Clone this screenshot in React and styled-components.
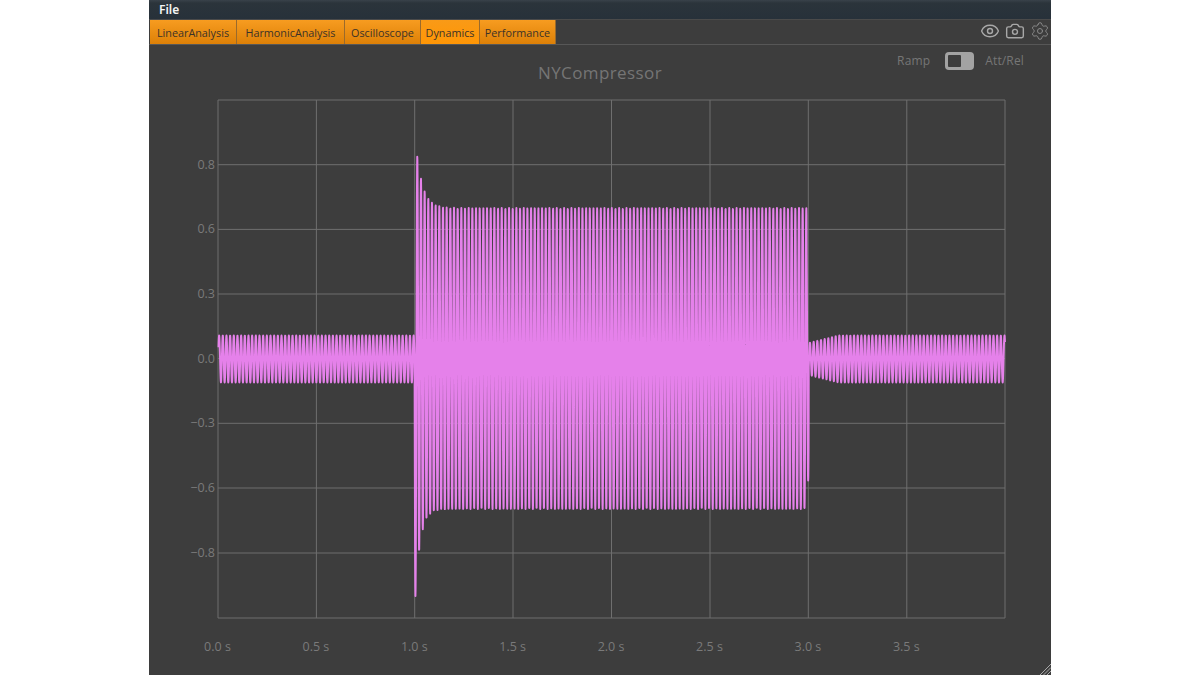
import React, { useMemo } from "react";
import styled, { createGlobalStyle } from "styled-components";
import { Eye, Camera, Settings } from "lucide-react";

const Global = createGlobalStyle`
  html, body { margin: 0; padding: 0; background: #fff; }
  body { font-family: "Open Sans", "Noto Sans", sans-serif; overflow: hidden; }
`;

const Page = styled.div`
  width: 1200px;
  height: 675px;
  display: flex;
  justify-content: center;
`;

const Win = styled.div`
  position: relative;
  width: 902px;
  height: 675px;
  background: #3d3d3d;
  display: flex;
  flex-direction: column;
  overflow: hidden;
`;

const MenuBar = styled.div`
  height: 19px;
  background: linear-gradient(#39424a 0, #2b343b 3px, #27313a 100%);
  display: flex;
  align-items: center;
  padding-left: 10px;
  border-bottom: 1px solid #4a4a4a;
`;

const MenuItem = styled.span`
  color: #f4f4f4;
  font-size: 12px;
  font-weight: 600;
  font-family: "Noto Sans", sans-serif;
`;

const TabRow = styled.div`
  height: 24px;
  display: flex;
  align-items: stretch;
  border-bottom: 1px solid #575757;
  padding-left: 1px;
`;

const Tab = styled.div`
  width: ${(p) => p.$w}px;
  box-sizing: border-box;
  display: flex;
  align-items: center;
  justify-content: center;
  font-size: 10.8px;
  padding-top: 1px;
  color: #3b3228;
  border-right: 1px solid #9a6a2c;
  background: ${(p) =>
    p.$active
      ? "linear-gradient(#f99a17, #ff9605)"
      : "linear-gradient(#f79c20, #dd8007)"};
`;

const IconGroup = styled.div`
  margin-left: auto;
  margin-bottom: 2px;
  display: flex;
  align-items: center;
  gap: 5px;
  padding-right: 1px;
  color: #a8a8a8;
`;

const Header = styled.div`
  height: 51px;
  display: grid;
  grid-template-columns: 1fr auto 1fr;
`;

const Title = styled.div`
  align-self: start;
  margin-top: 16px;
  font-size: 17px;
  line-height: 24px;
  letter-spacing: 0.4px;
  color: #757575;
`;

const ToggleRow = styled.div`
  justify-self: end;
  align-self: start;
  margin-top: 7px;
  margin-right: 27px;
  display: flex;
  align-items: center;
  gap: 15px;
  font-size: 12px;
  letter-spacing: 0.15px;
  line-height: 18px;
  color: #767676;
`;

const Switch = styled.div`
  width: 29px;
  height: 18px;
  box-sizing: border-box;
  border-radius: 4px;
  background: #a3a3a3;
  padding: 3px 3px;
  margin-right: -4px;
`;

const Knob = styled.div`
  width: 13px;
  height: 12px;
  background: #3d3d3d;
  border-radius: 1px;
`;

const Plot = styled.svg`
  display: block;
  flex: none;
  width: 902px;
  height: 580px;
`;

const Grip = styled.svg`
  position: absolute;
  right: 0;
  bottom: 0;
  width: 12px;
  height: 12px;
`;

const tabs = [
  ["LinearAnalysis", 87],
  ["HarmonicAnalysis", 108],
  ["Oscilloscope", 76],
  ["Dynamics", 59],
  ["Performance", 76],
];

const vLines = [218, 316.4, 414.7, 513, 611.5, 710, 808.3, 906.8, 1005];
const hLines = [100, 164.7, 229.4, 294, 358.5, 423.3, 488, 553, 618];
const yLabels = [
  ["0.8", 164.7],
  ["0.6", 229.4],
  ["0.3", 294],
  ["0.0", 358.5],
  ["−0.3", 423.3],
  ["−0.6", 488],
  ["−0.8", 553],
];
const xLabels = ["0.0 s", "0.5 s", "1.0 s", "1.5 s", "2.0 s", "2.5 s", "3.0 s", "3.5 s"];

function envelope(x) {
  if (x < 414.3) return [23, 24];
  if (x < 806.6) {
    const up = x < 415.8 ? 23 : 150.5 + 52 * Math.exp(-Math.max(0, x - 417.3) / 6.5);
    const down = 150.5 + 87 * Math.exp(-Math.max(0, x - 415.5) / 5);
    return [up, down];
  }
  if (x < 808.6) return [122, 122];
  const r = Math.min(1, (x - 808.6) / 30);
  const a = 15.5 + 7.5 * r;
  return [a, a + 1];
}

function buildWave() {
  const period = 3.67;
  const pts = [];
  for (let x = 218.5; x <= 1005; x += 0.15) {
    const s = Math.cos((2 * Math.PI * (x - 417.3)) / period);
    const [up, down] = envelope(x);
    const y = 358.5 - (s > 0 ? s * up : s * down);
    pts.push(`${x.toFixed(2)},${y.toFixed(2)}`);
  }
  return "M" + pts.join("L");
}

export default function App() {
  const wave = useMemo(buildWave, []);
  return (
    <Page>
      <Global />
      <Win>
        <MenuBar>
          <MenuItem>File</MenuItem>
        </MenuBar>
        <TabRow>
          {tabs.map(([name, w]) => (
            <Tab key={name} $w={w} $active={name === "Dynamics"}>
              {name}
            </Tab>
          ))}
          <IconGroup>
            <Eye size={20} strokeWidth={1.7} />
            <Camera size={20} strokeWidth={1.7} />
            <Settings size={20} strokeWidth={1.2} color="#8a8a8a" />
          </IconGroup>
        </TabRow>
        <Header>
          <span />
          <Title>NYCompressor</Title>
          <ToggleRow>
            <span>Ramp</span>
            <Switch>
              <Knob />
            </Switch>
            <span>Att/Rel</span>
          </ToggleRow>
        </Header>
        <Plot viewBox="149 95 902 580">
          <g stroke="#6f6f6f" strokeWidth="1">
            {vLines.map((x) => (
              <line key={x} x1={x} x2={x} y1={100} y2={618} />
            ))}
            {hLines.map((y) => (
              <line key={y} x1={218} x2={1005} y1={y} y2={y} />
            ))}
          </g>
          <path d={wave} fill="none" stroke="#e581ea" strokeWidth="1.95" strokeLinejoin="round" />
          <g fill="#7a7a7a" fontFamily="'Open Sans', sans-serif" fontSize="12.5">
            {yLabels.map(([t, y]) => (
              <text key={t} x={215} y={y + 4} textAnchor="end">
                {t}
              </text>
            ))}
            {xLabels.map((t, i) => (
              <text key={t} x={217.5 + i * 98.4} y={650.5} textAnchor="middle">
                {t}
              </text>
            ))}
          </g>
        </Plot>
        <Grip viewBox="0 0 12 12">
          <path d="M1 12L12 1M4.5 12L12 4.5M8 12L12 8" stroke="#a8a8a8" strokeWidth="1" fill="none" />
        </Grip>
      </Win>
    </Page>
  );
}
